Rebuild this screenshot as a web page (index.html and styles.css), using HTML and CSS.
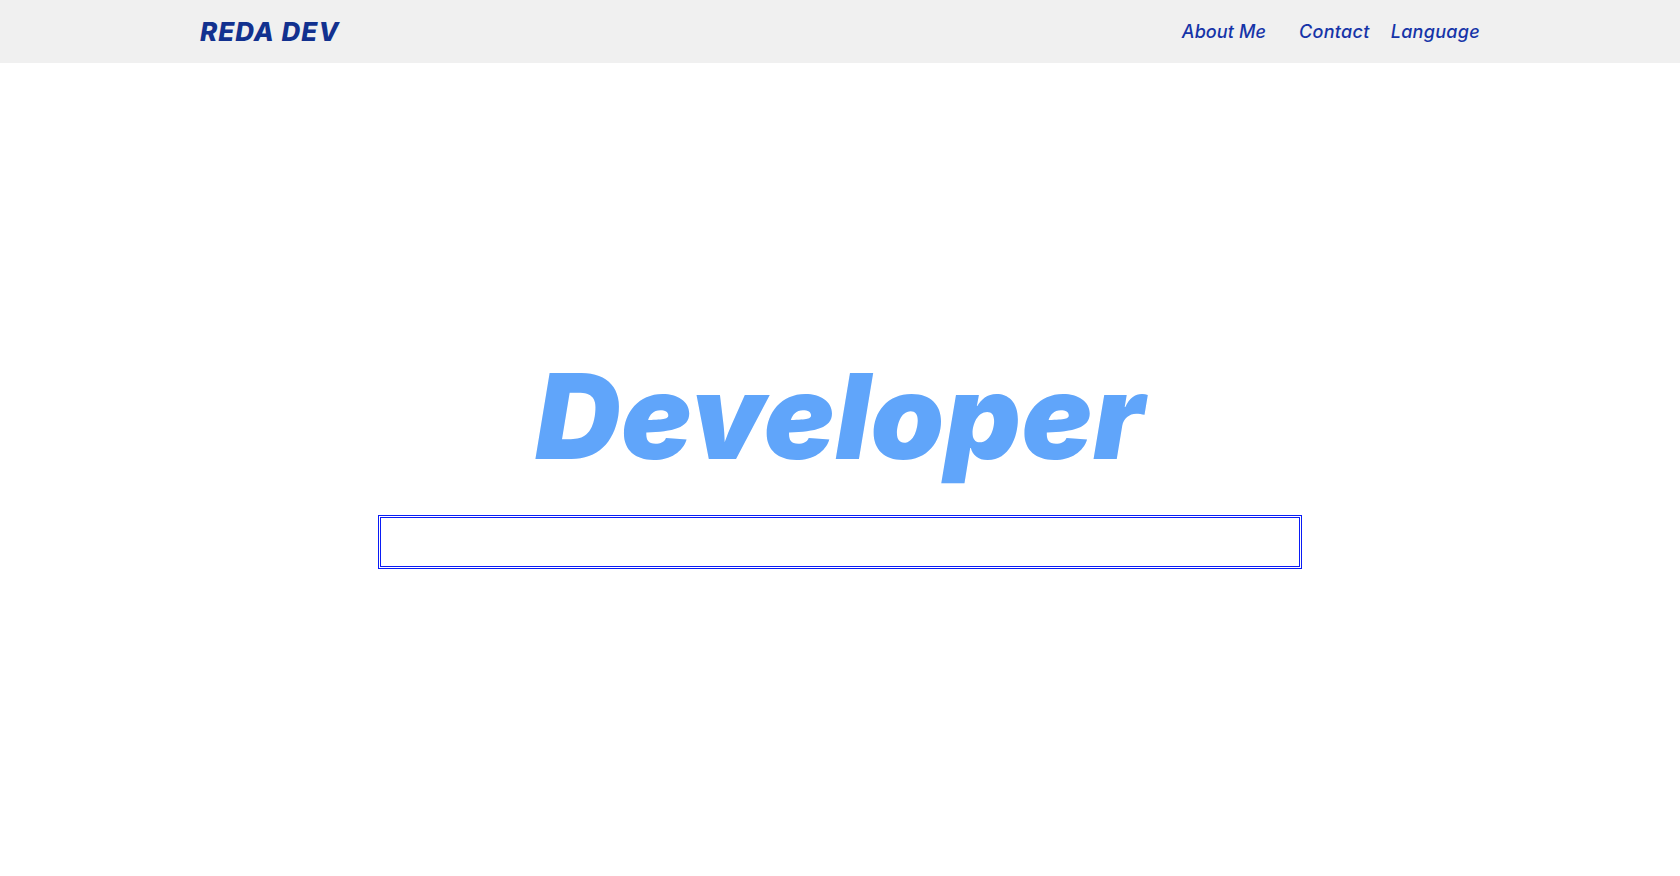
FILE: index.html
```html
<!DOCTYPE html>
<html lang="en">
<head>
<meta charset="utf-8">
<title>Reda Dev</title>
<link rel="stylesheet" href="styles.css">
</head>
<body>
<header class="topbar">
  <div class="topbar__inner">
    <a class="logo" href="#">REDA DEV</a>
    <nav class="nav">
      <a class="nav__link nav__link--wide" href="#">About Me</a>
      <a class="nav__link" href="#">Contact</a>
      <a class="nav__link" href="#">Language</a>
    </nav>
  </div>
</header>
<main class="hero">
  <h1 class="hero__title">Developer</h1>
  <div class="hero__box"></div>
</main>
</body>
</html>
```
FILE: styles.css
```css
* { box-sizing: border-box; }
html, body { margin: 0; padding: 0; }
body {
  font-family: "Inter", "Noto Sans", sans-serif;
  background: #ffffff;
  overflow: hidden;
}
.topbar {
  background: #f0f0f0;
  height: 63px;
}
.topbar__inner {
  height: 100%;
  padding: 0 200px 0 200px;
  display: flex;
  align-items: center;
  justify-content: space-between;
}
.logo {
  font-size: 26px;
  font-weight: 800;
  font-style: italic;
  letter-spacing: 1px;
  color: #12318f;
  text-decoration: none;
}
.nav {
  display: flex;
  align-items: center;
  gap: 21px;
}
.nav__link {
  font-size: 18px;
  font-weight: 500;
  font-style: italic;
  letter-spacing: 0.3px;
  color: #1634a8;
  text-decoration: none;
}
.nav__link--wide { margin-right: 12px; letter-spacing: 0.1px; }
.hero {
  display: flex;
  flex-direction: column;
  align-items: center;
  padding-top: 294px;
}
.hero__title {
  margin: 0;
  font-size: 118px;
  line-height: 118px;
  font-weight: 900;
  font-style: italic;
  color: #60a5fa;
  letter-spacing: 0.5px;
}
.hero__box {
  margin-top: 40px;
  width: 55%;
  height: 54px;
  border: 3px double #0a1cf5;
}
```
